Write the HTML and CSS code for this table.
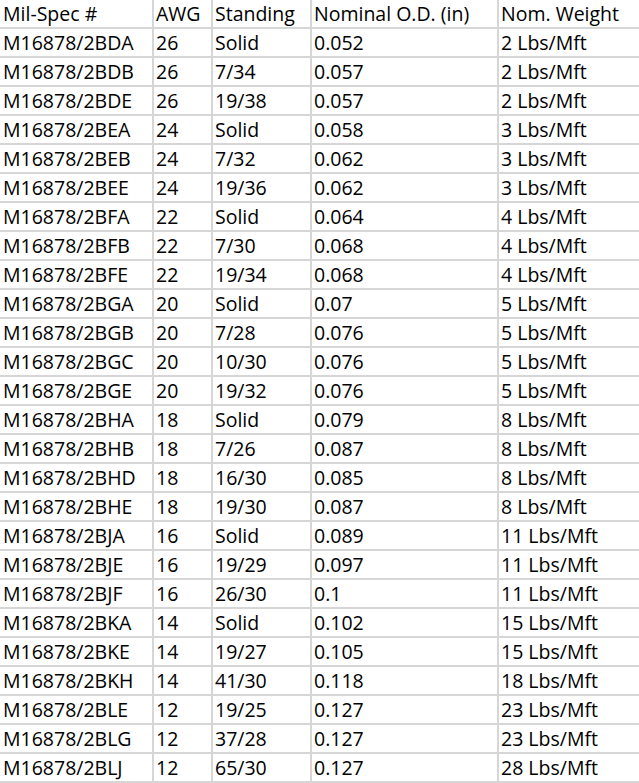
FILE: index.html
```html
<!DOCTYPE html>
<html>
<head>
<meta charset="utf-8">
<link rel="stylesheet" href="styles.css">
</head>
<body>
<table class="sheet">
<colgroup><col class="c1"><col class="c2"><col class="c3"><col class="c4"><col class="c5"></colgroup>
<tbody>
<tr><td>Mil-Spec #</td><td>AWG</td><td>Standing</td><td>Nominal O.D. (in)</td><td>Nom. Weight</td></tr>
<tr><td>M16878/2BDA</td><td>26</td><td>Solid</td><td>0.052</td><td>2 Lbs/Mft</td></tr>
<tr><td>M16878/2BDB</td><td>26</td><td>7/34</td><td>0.057</td><td>2 Lbs/Mft</td></tr>
<tr><td>M16878/2BDE</td><td>26</td><td>19/38</td><td>0.057</td><td>2 Lbs/Mft</td></tr>
<tr><td>M16878/2BEA</td><td>24</td><td>Solid</td><td>0.058</td><td>3 Lbs/Mft</td></tr>
<tr><td>M16878/2BEB</td><td>24</td><td>7/32</td><td>0.062</td><td>3 Lbs/Mft</td></tr>
<tr><td>M16878/2BEE</td><td>24</td><td>19/36</td><td>0.062</td><td>3 Lbs/Mft</td></tr>
<tr><td>M16878/2BFA</td><td>22</td><td>Solid</td><td>0.064</td><td>4 Lbs/Mft</td></tr>
<tr><td>M16878/2BFB</td><td>22</td><td>7/30</td><td>0.068</td><td>4 Lbs/Mft</td></tr>
<tr><td>M16878/2BFE</td><td>22</td><td>19/34</td><td>0.068</td><td>4 Lbs/Mft</td></tr>
<tr><td>M16878/2BGA</td><td>20</td><td>Solid</td><td>0.07</td><td>5 Lbs/Mft</td></tr>
<tr><td>M16878/2BGB</td><td>20</td><td>7/28</td><td>0.076</td><td>5 Lbs/Mft</td></tr>
<tr><td>M16878/2BGC</td><td>20</td><td>10/30</td><td>0.076</td><td>5 Lbs/Mft</td></tr>
<tr><td>M16878/2BGE</td><td>20</td><td>19/32</td><td>0.076</td><td>5 Lbs/Mft</td></tr>
<tr><td>M16878/2BHA</td><td>18</td><td>Solid</td><td>0.079</td><td>8 Lbs/Mft</td></tr>
<tr><td>M16878/2BHB</td><td>18</td><td>7/26</td><td>0.087</td><td>8 Lbs/Mft</td></tr>
<tr><td>M16878/2BHD</td><td>18</td><td>16/30</td><td>0.085</td><td>8 Lbs/Mft</td></tr>
<tr><td>M16878/2BHE</td><td>18</td><td>19/30</td><td>0.087</td><td>8 Lbs/Mft</td></tr>
<tr><td>M16878/2BJA</td><td>16</td><td>Solid</td><td>0.089</td><td>11 Lbs/Mft</td></tr>
<tr><td>M16878/2BJE</td><td>16</td><td>19/29</td><td>0.097</td><td>11 Lbs/Mft</td></tr>
<tr><td>M16878/2BJF</td><td>16</td><td>26/30</td><td>0.1</td><td>11 Lbs/Mft</td></tr>
<tr><td>M16878/2BKA</td><td>14</td><td>Solid</td><td>0.102</td><td>15 Lbs/Mft</td></tr>
<tr><td>M16878/2BKE</td><td>14</td><td>19/27</td><td>0.105</td><td>15 Lbs/Mft</td></tr>
<tr><td>M16878/2BKH</td><td>14</td><td>41/30</td><td>0.118</td><td>18 Lbs/Mft</td></tr>
<tr><td>M16878/2BLE</td><td>12</td><td>19/25</td><td>0.127</td><td>23 Lbs/Mft</td></tr>
<tr><td>M16878/2BLG</td><td>12</td><td>37/28</td><td>0.127</td><td>23 Lbs/Mft</td></tr>
<tr><td>M16878/2BLJ</td><td>12</td><td>65/30</td><td>0.127</td><td>28 Lbs/Mft</td></tr>
</tbody>
</table>
</body>
</html>
```

FILE: styles.css
```css
html, body {
  margin: 0;
  padding: 0;
  background: #ffffff;
}

.sheet {
  border-collapse: separate;
  border-spacing: 0;
  table-layout: fixed;
  width: 639px;
  font-family: "Open Sans", "Noto Sans", sans-serif;
  font-size: 19.5px;
  color: #000000;
}

.c1 { width: 154px; }
.c2 { width: 59px; }
.c3 { width: 99px; }
.c4 { width: 187px; }
.c5 { width: 140px; }

.sheet td {
  height: 27px;
  line-height: 27px;
  padding: 0 0 0 2px;
  white-space: nowrap;
  overflow: hidden;
  vertical-align: top;
  border-right: 2px solid #d6d6d6;
  border-bottom: 2px solid #d6d6d6;
  box-sizing: content-box;
}

.sheet td:first-child {
  padding-left: 3px;
}

.sheet td:last-child {
  border-right: none;
}
```
